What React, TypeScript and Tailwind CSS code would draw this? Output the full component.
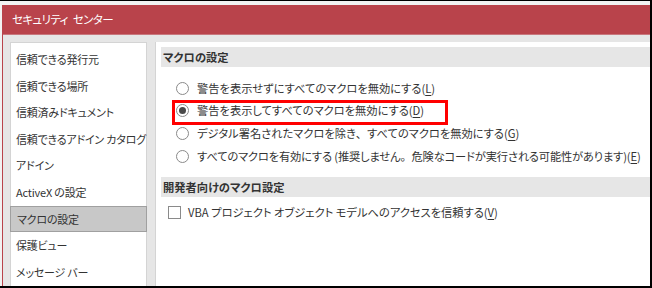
import React from "react";

const font = {
  fontFamily: '"Noto Sans CJK JP", "Noto Sans", sans-serif',
  fontFeatureSettings: '"palt"',
};

const full = { fontFeatureSettings: "normal" };

function Radio({ checked }: { checked?: boolean }) {
  return (
    <span className="w-[13px] h-[13px] rounded-full border border-[#8a8a8a] bg-white flex items-center justify-center shrink-0">
      {checked && <span className="w-[7px] h-[7px] rounded-full bg-[#4a4a4a]" />}
    </span>
  );
}

function U({ c }: { c: string }) {
  return <span className="underline underline-offset-2">{c}</span>;
}

export default function App() {
  const items = [
    "信頼できる発行元",
    "信頼できる場所",
    "信頼済みドキュメント",
    "信頼できるアドイン カタログ",
    "アドイン",
    "ActiveX の設定",
    "マクロの設定",
    "保護ビュー",
    "メッセージ バー",
  ];
  return (
    <div
      className="w-[652px] h-[288px] bg-black pt-px pr-[2px] pb-[2px] overflow-hidden text-[#333]"
      style={font}
    >
      <div className="h-full bg-[#f2f2f2] pt-[4px] pl-[2px] overflow-hidden">
        <div className="h-[300px] border-l border-[#b9434b] flex flex-col">
          <div className="h-[30px] bg-[#b9434b] text-white text-[11.5px] tracking-[-0.6px] pl-[9px] flex items-center border-b border-[#c8777d] whitespace-pre">
            <span>セキュリティ</span>
            <span className="w-[5px]" />
            <span>センター</span>
          </div>
          <div className="flex-1 bg-[#e6e6e6] pt-[7px] pl-[7px] flex">
            <div className="w-[137px] shrink-0 bg-white border border-[#d4d4d4] pt-[3px] flex flex-col text-[11px] tracking-[-0.2px]">
              {items.map((t) => (
                <div
                  key={t}
                  className={
                    "h-[26.6px] flex items-center pl-[5px] whitespace-nowrap " +
                    (t === "マクロの設定"
                      ? "bg-[#c8c8c8] border border-[#a0a0a0] -mx-px pl-[6px]"
                      : "")
                  }
                >
                  {t}
                </div>
              ))}
            </div>
            <div className="w-[8px] shrink-0" />
            <div className="flex-1 min-w-0 bg-white border-l border-[#d4d4d4] pt-[5px] pl-[5px] text-[11.25px] whitespace-nowrap">
              <div className="h-[20px] bg-[#e6e6e6] flex items-center pl-[2px] font-bold">
                マクロの設定
              </div>
              <div className="pl-[15px] pt-[10px] flex flex-col">
                <div className="h-[22px] flex items-center gap-[8px]">
                  <Radio />
                  <span>
                    警告を表示せずにすべてのマクロを無効にする(<U c="L" />)
                  </span>
                </div>
                <div className="relative h-[23px] flex items-center gap-[8px]">
                  <Radio checked />
                  <span>
                    警告を表示してすべてのマクロを無効にする(<U c="D" />)
                  </span>
                  <div className="absolute left-[-4px] top-[1px] w-[276px] h-[25px] border-[3px] border-[#ff0000]" />
                </div>
                <div className="h-[23px] flex items-center gap-[8px]">
                  <Radio />
                  <span>
                    デジタル署名されたマクロを除き<span style={full}>、</span>すべてのマクロを無効にする(<U c="G" />)
                  </span>
                </div>
                <div className="h-[23px] flex items-center gap-[8px]">
                  <Radio />
                  <span className="tracking-[-0.15px]">
                    すべてのマクロを有効にする (推奨しません<span style={full}>。</span>危険なコードが実行される可能性があります)(<U c="E" />)
                  </span>
                </div>
              </div>
              <div className="mt-[9px] h-[20px] bg-[#e6e6e6] flex items-center pl-[2px] font-bold">
                開発者向けのマクロ設定
              </div>
              <div className="pl-[7px] pt-[7px] flex items-center gap-[7px]">
                <span className="w-[13px] h-[13px] border border-[#8a8a8a] bg-white shrink-0" />
                <span>
                  VBA プロジェクト オブジェクト モデルへのアクセスを信頼する(<U c="V" />)
                </span>
              </div>
            </div>
          </div>
        </div>
      </div>
    </div>
  );
}
